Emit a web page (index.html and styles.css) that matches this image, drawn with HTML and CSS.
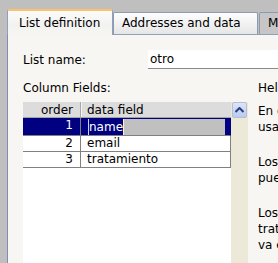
FILE: index.html
```html
<!DOCTYPE html>
<html>
<head>
    <title>Mailing list</title>
    <link rel="stylesheet" href="styles.css">
</head>
<body>
    <div class="window">
        <div class="tabs">
            <div class="tab active">List definition</div>
            <div class="tab second">Addresses and data</div>
            <div class="tab third">Members</div>
        </div>
        <div class="panel">
            <div class="name-row">
                <label for="list-name">List name:</label>
                <input type="text" id="list-name" value="otro">
            </div>
            <div class="body-row">
                <div class="fields">
                    <div class="caption">Column Fields:</div>
                    <div class="grid-wrap">
                        <div class="grid">
                            <div class="row head">
                                <div class="cell num">order</div>
                                <div class="cell field">data field</div>
                            </div>
                            <div class="row selected">
                                <div class="cell num">1</div>
                                <div class="cell field">
                                    <div class="editor"><span class="sel">name</span><span class="caret"></span></div>
                                </div>
                            </div>
                            <div class="row">
                                <div class="cell num">2</div>
                                <div class="cell field">email</div>
                            </div>
                            <div class="row">
                                <div class="cell num">3</div>
                                <div class="cell field">tratamiento</div>
                            </div>
                        </div>
                        <div class="scroll">
                            <button class="scroll-up">
                                <svg width="9" height="6" viewBox="0 0 9 6"><path d="M0.5 5 L4.5 1 L8.5 5" fill="none" stroke="#2b3f78" stroke-width="2"/></svg>
                            </button>
                        </div>
                    </div>
                </div>
                <div class="help">
                    <div class="help-title">Help</div>
                    <p>En esta pestaña se define la lista<br>usada para los envíos.</p>
                    <p>Los campos de la lista se<br>pueden ordenar a su gusto.</p>
                    <p>Los campos especiales como el<br>tratamiento se usan en el texto que<br>va en cada correo.</p>
                </div>
            </div>
        </div>
    </div>
</body>
</html>
```

FILE: styles.css
```css
* {
    box-sizing: border-box;
}

body {
    margin: 0;
    background: #bfbfbf;
    font-family: "DejaVu Sans", sans-serif;
    font-size: 12px;
    color: #000;
    overflow: hidden;
}

.window {
    width: 278px;
    height: 263px;
    overflow: hidden;
}

.tabs {
    display: flex;
    align-items: flex-end;
    height: 34px;
    padding-left: 7px;
    white-space: nowrap;
}

.tab {
    flex-shrink: 0;
    height: 22px;
    line-height: 21px;
    border: 1px solid #8c9cb0;
    border-bottom: none;
    border-radius: 2px 2px 0 0;
    background: linear-gradient(#fdfdfd, #e6e6e6);
    padding-left: 8px;
}

.tab.active {
    position: relative;
    z-index: 1;
    width: 106px;
    height: 26px;
    line-height: 25px;
    margin-bottom: -1px;
    padding-left: 11px;
    border-color: #8ea0bc;
    border-top: 2px solid #fcc26a;
    background: linear-gradient(#fbfbfb, #f2f2f0 60%, #f7f6f2);
}

.tab.second {
    width: 145px;
}

.tab.third {
    width: 60px;
    margin-left: 1px;
    background: #c6c6c6;
}

.panel {
    height: 229px;
    margin-left: 7px;
    border-top: 1px solid #8ea0bc;
    border-left: 1px solid #7b8fb8;
    background: #f7f6f2;
    overflow: hidden;
}

.name-row {
    display: flex;
    align-items: center;
    padding: 15px 0 0 15px;
    height: 34px;
}

.name-row label {
    width: 125px;
    flex-shrink: 0;
}

.name-row input {
    flex-shrink: 0;
    width: 300px;
    height: 19px;
    border: none;
    border-bottom: 1px solid #8a8a8a;
    background: #fff;
    padding: 0 2px;
    font: inherit;
    outline: none;
}

.body-row {
    display: flex;
    padding-top: 11px;
}

.fields {
    padding-left: 15px;
    width: 240px;
    flex-shrink: 0;
}

.caption {
    line-height: 16px;
    margin-bottom: 6px;
}

.grid-wrap {
    display: flex;
    height: 200px;
}

.grid {
    width: 208px;
    background: #fff;
}

.row {
    display: flex;
    height: 16px;
    line-height: 15px;
    border-bottom: 1px solid #808080;
    border-right: 1px solid #808080;
}

.row.head {
    background: #dcdcdc;
    border-bottom-color: #a4a4a4;
    border-right: none;
    line-height: 16px;
}

.row.selected {
    height: 18px;
    background: #000080;
    color: #fff;
    border-bottom-color: #808080;
    border-right-color: #000080;
}

.cell {
    white-space: nowrap;
    overflow: hidden;
}

.cell.num {
    width: 58px;
    text-align: right;
    padding-right: 7px;
    border-right: 1px solid #808080;
}

.row.head .cell.num {
    border-right-color: #a8a8a8;
    box-shadow: 1px 0 0 #f4f4f4;
}

.cell.field {
    flex: 1;
    padding-left: 6px;
}

.row.selected .cell.field {
    padding: 1px 5px 1px 1px;
}

.editor {
    display: flex;
    height: 16px;
    line-height: 16px;
    margin-left: 6px;
    background: #c0c0c0;
    border-left: 1px solid #c8d4ff;
}

.sel {
    background: #000080;
    color: #fff;
}

.caret {
    width: 1px;
    background: #fff8b0;
}

.scroll {
    width: 17px;
    background: #ece9d8;
    padding: 0 1px 0 1px;
}

.scroll-up {
    display: flex;
    align-items: center;
    justify-content: center;
    width: 15px;
    height: 16px;
    padding: 0;
    border: 1px solid #b7bfcf;
    border-radius: 2px;
    background: linear-gradient(#dbe5fb, #b9cbf3);
}

.help {
    padding-left: 10px;
    white-space: nowrap;
    line-height: 16px;
}

.help-title {
    margin-bottom: 7px;
}

.help p {
    margin: 0 0 19px;
}
```
